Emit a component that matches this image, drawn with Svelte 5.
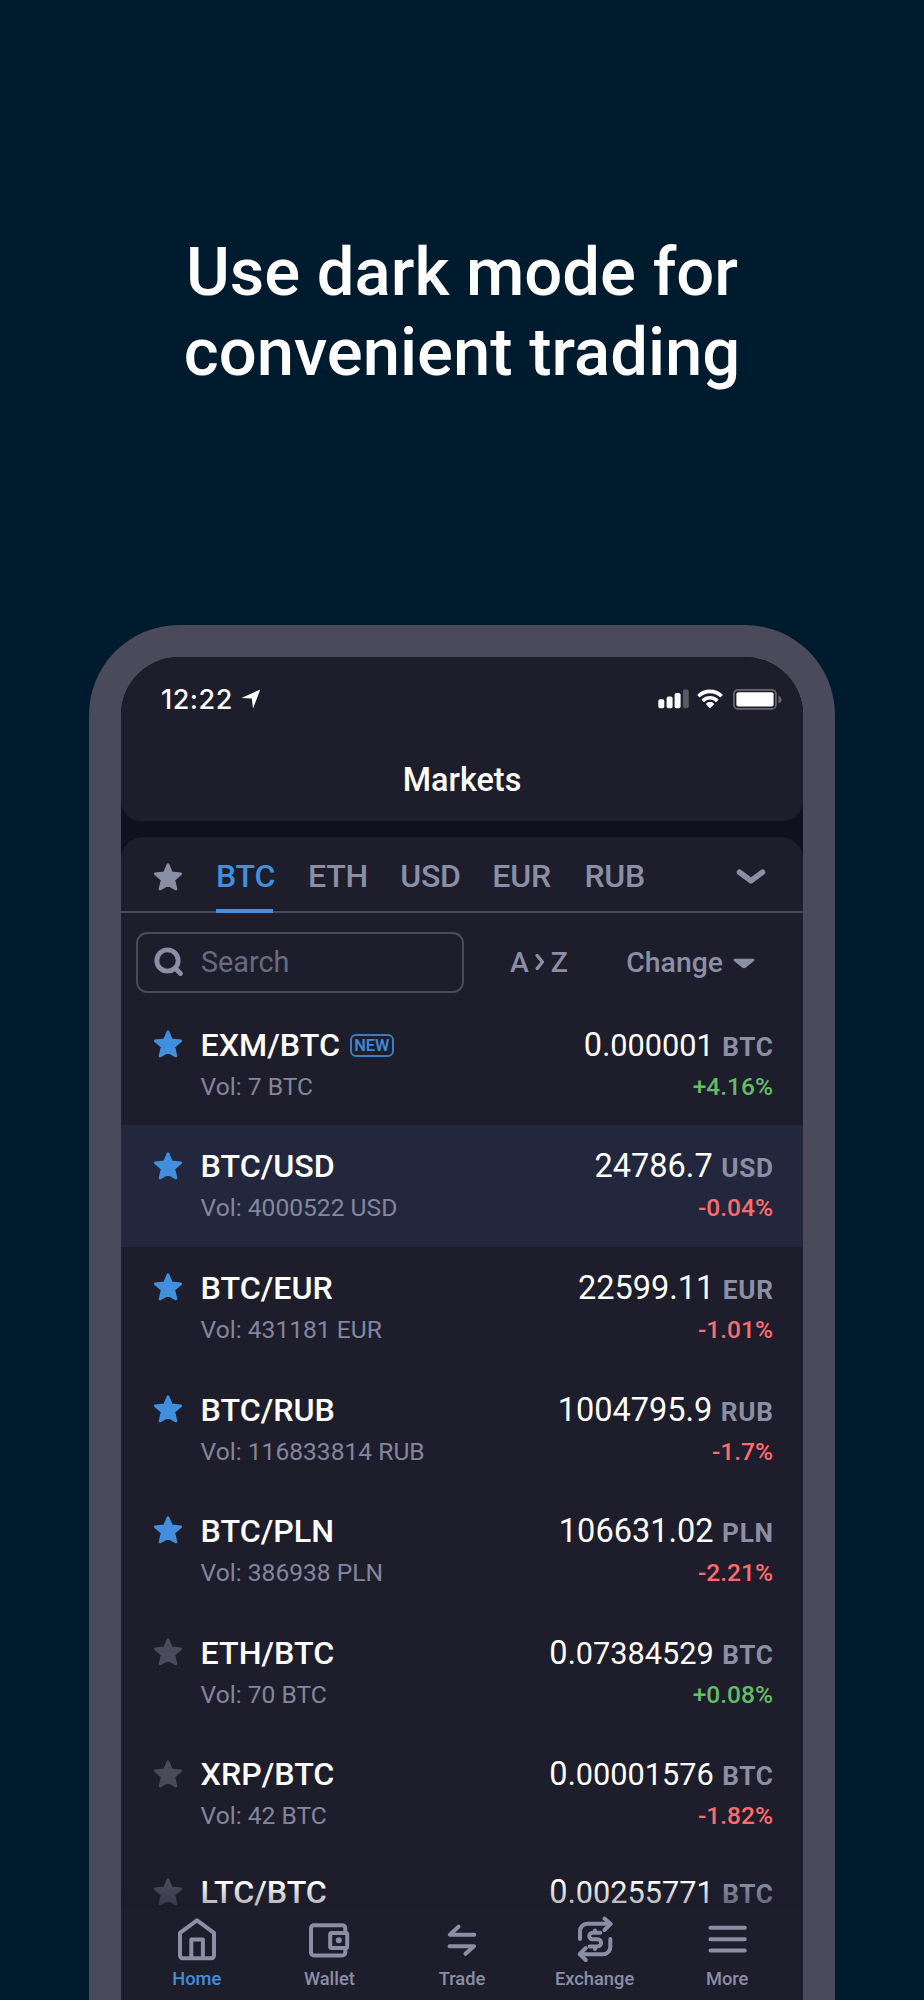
<script lang="ts">
  interface Market {
    pair: string;
    volume?: string;
    price: string;
    currency: string;
    change?: string;
    favorite?: boolean;
    fresh?: boolean;
    selected?: boolean;
  }

  const currencies = ['BTC', 'ETH', 'USD', 'EUR', 'RUB'];
  const navItems = ['Home', 'Wallet', 'Trade', 'Exchange', 'More'];

  const markets: Market[] = [
    { pair: 'EXM/BTC', volume: '7 BTC', price: '0.000001', currency: 'BTC', change: '+4.16%', favorite: true, fresh: true },
    { pair: 'BTC/USD', volume: '4000522 USD', price: '24786.7', currency: 'USD', change: '-0.04%', favorite: true, selected: true },
    { pair: 'BTC/EUR', volume: '431181 EUR', price: '22599.11', currency: 'EUR', change: '-1.01%', favorite: true },
    { pair: 'BTC/RUB', volume: '116833814 RUB', price: '1004795.9', currency: 'RUB', change: '-1.7%', favorite: true },
    { pair: 'BTC/PLN', volume: '386938 PLN', price: '106631.02', currency: 'PLN', change: '-2.21%', favorite: true },
    { pair: 'ETH/BTC', volume: '70 BTC', price: '0.07384529', currency: 'BTC', change: '+0.08%' },
    { pair: 'XRP/BTC', volume: '42 BTC', price: '0.00001576', currency: 'BTC', change: '-1.82%' },
    { pair: 'LTC/BTC', price: '0.00255771', currency: 'BTC' }
  ];

  let activeTab = $state('BTC');
  let activeNav = $state('Home');
</script>

{#snippet star()}
  <svg class="star" viewBox="0 0 28 28" aria-hidden="true">
    <path
      d="M14 1.6 17.5 9.7 26.8 10.7 19.9 16.9 22 26 14 21.6 6 26 8.1 16.9 1.2 10.7 10.5 9.7Z"
    />
  </svg>
{/snippet}

<main>
  <h1>Use dark mode for<br />convenient trading</h1>

  <div class="phone">
    <div class="screen">
      <header>
        <div class="status">
          <span class="time">12:22</span>
          <svg class="location" viewBox="0 0 20 20" aria-hidden="true">
            <path d="M19.3.6 12 19.5 10.8 9.6.4 8.9Z" />
          </svg>
          <svg class="signal" viewBox="0 0 31 20" aria-hidden="true">
            <rect x="0.3" y="10.3" width="6" height="9" rx="1.8" />
            <rect x="8.6" y="7.6" width="6" height="11.7" rx="1.8" />
            <rect x="16.6" y="4" width="6" height="15.3" rx="1.8" />
            <rect x="25" y="0.6" width="5.7" height="18.7" rx="1.8" opacity="0.27" />
          </svg>
          <svg class="wifi" viewBox="0 0 26 20" aria-hidden="true">
            <path
              d="M13 .6C8.1.6 3.8 2.5.6 5.5a.8.8 0 0 0 0 1.1l1.5 1.5q.5.5 1.1 0a14.3 14.3 0 0 1 19.6 0q.6.5 1.1 0l1.5-1.5a.8.8 0 0 0 0-1.1C22.2 2.5 17.9.6 13 .6Z"
            />
            <path
              d="M13 7C9.9 7 7.1 8.2 5 10.1a.8.8 0 0 0 0 1.2l1.5 1.4q.5.5 1.1 0a8 8 0 0 1 10.8 0q.6.5 1.1 0l1.5-1.4a.8.8 0 0 0 0-1.2C18.9 8.2 16.1 7 13 7Z"
            />
            <path
              d="M13 13.1c-1.5 0-2.8.5-3.8 1.4a.7.7 0 0 0 0 1.1l3.2 3.2q.6.5 1.2 0l3.2-3.2a.7.7 0 0 0 0-1.1c-1-.9-2.3-1.4-3.8-1.4Z"
            />
          </svg>
          <svg class="battery" viewBox="0 0 49 21" aria-hidden="true">
            <rect x="0.9" y="0.9" width="42" height="19" rx="4" fill="none" stroke="#686773" stroke-width="1.7" />
            <rect x="3.4" y="3.3" width="37.2" height="14.3" rx="2" />
            <path class="tip" d="M45.5 6.6q3 1.3 3 3.9t-3 3.9Z" />
          </svg>
        </div>
        <h2>Markets</h2>
      </header>

      <section class="panel">
        <div class="tabs">
          {@render star()}
          {#each currencies as currency (currency)}
            <button type="button" class:active={activeTab === currency} onclick={() => (activeTab = currency)}
              >{currency}</button
            >
          {/each}
          <svg class="chevron" viewBox="0 0 30 18" aria-hidden="true">
            <path d="M3.5 4.2 15 12.8 26.5 4.2" />
          </svg>
        </div>

        <div class="controls">
          <div class="search">
            <svg viewBox="0 0 30 30" aria-hidden="true">
              <circle cx="13.5" cy="13.5" r="10.7" />
              <path d="m21.5 21.5 5 5" />
            </svg>
            <span>Search</span>
          </div>
          <div class="sort">
            A
            <svg viewBox="0 0 10 18" aria-hidden="true"><path d="M2.2 2.5 7.4 9 2.2 15.5" /></svg>
            Z
          </div>
          <div class="change-sort">
            Change
            <svg viewBox="0 0 22 12" aria-hidden="true">
              <path d="M1.5.8h19q1.8.7.4 2.2l-8 6.6q-1.9 1.2-3.8 0L1.1 3Q-.3 1.5 1.5.8Z" />
            </svg>
          </div>
        </div>

        <div class="list">
          {#each markets as market (market.pair)}
            <div class="row" class:selected={market.selected} class:favorite={market.favorite}>
              {@render star()}
              <div class="info">
                <div class="pair">
                  {market.pair}
                  {#if market.fresh}<span class="badge">NEW</span>{/if}
                </div>
                {#if market.volume}<div class="volume">Vol: {market.volume}</div>{/if}
              </div>
              <div class="quote">
                <div class="price">
                  {#if market.price.startsWith('0.')}0<span class="fraction">{market.price.slice(1)}</span
                    >{:else}{market.price}{/if}<span class="currency">{market.currency}</span>
                </div>
                {#if market.change}
                  <div class="change" class:up={market.change.startsWith('+')}>{market.change}</div>
                {/if}
              </div>
            </div>
          {/each}
        </div>
      </section>

      <nav>
        {#each navItems as item (item)}
          <button type="button" class:active={activeNav === item} onclick={() => (activeNav = item)}>
            <svg viewBox="0 0 48 48" aria-hidden="true">
              {#if item === 'Home'}
                <path d="M24 5.3 7 17.8V40.5a2.8 2.8 0 0 0 2.8 2.8H38.2A2.8 2.8 0 0 0 41 40.5V17.8Z" />
                <path d="M18.3 43V24.4H29.9V43" />
              {:else if item === 'Wallet'}
                <path d="M40.3 17V13.2A3 3 0 0 0 37.3 10.2H9A3 3 0 0 0 6 13.2V37.5A3 3 0 0 0 9 40.5H37.3A3 3 0 0 0 40.3 37.5V34" />
                <rect x="25.2" y="18" width="17" height="15" rx="1.5" />
                <circle class="dot" cx="33.8" cy="25.3" r="3" />
              {:else if item === 'Trade'}
                <path d="M20.5 11.7 11.8 19.7H36.3" />
                <path d="M11.5 31.2H36L27.5 38.8" />
              {:else if item === 'Exchange'}
                <path d="M9 24V16A7.3 7.3 0 0 1 16.3 8.7H39" />
                <path d="M33.5 3.5 39.7 8.9 33.5 15" />
                <path d="M39.3 24V32A7.3 7.3 0 0 1 32 39.3H9.3" />
                <path d="M14.8 33 8.6 39.1 14.8 45" />
                <path
                  d="M29.2 17.8H21.5a3.2 3.2 0 0 0 0 6.4h5a3.6 3.6 0 0 1 0 7.2H18.7M24 15.5v2M24 32v2"
                />
              {:else}
                <path d="M7.5 12.8H41.8M7.5 24.2H41.8M7.5 35.6H41.8" />
              {/if}
            </svg>
            <span>{item}</span>
          </button>
        {/each}
      </nav>
    </div>
  </div>
</main>

<style>
  :global(body) {
    background: #001a2e;
  }

  main {
    box-sizing: border-box;
    width: 924px;
    height: 2000px;
    padding-top: 232px;
    overflow: hidden;
    background: #001a2e;
    color: #fff;
    font-family: Roboto, sans-serif;
  }

  h1 {
    height: 160px;
    margin: 0 0 233px;
    font-size: 67px;
    font-weight: 500;
    line-height: 80px;
    text-align: center;
  }

  button {
    padding: 0;
    border: 0;
    background: none;
    color: inherit;
    font: inherit;
  }

  .phone {
    box-sizing: border-box;
    width: 746px;
    height: 1375px;
    margin: 0 auto;
    padding: 32px 32px 0;
    border-radius: 90px 90px 0 0;
    background: #4a4a5b;
  }

  .screen {
    display: flex;
    flex-direction: column;
    height: 1343px;
    overflow: hidden;
    border-radius: 58px 58px 0 0;
    background: #11101f;
  }

  header {
    flex: none;
    height: 164px;
    border-radius: 0 0 20px 20px;
    background: #1e1d2b;
  }

  .status {
    display: flex;
    align-items: center;
    height: 84px;
    padding: 0 21px 0 40px;
  }

  .status svg {
    fill: #fff;
  }

  .time {
    font-family: Inter, sans-serif;
    font-size: 27px;
    font-weight: 500;
    letter-spacing: 0.5px;
  }

  .location {
    width: 20px;
    height: 20px;
    margin-left: 8px;
  }

  .signal {
    width: 31px;
    height: 20px;
    margin-left: auto;
  }

  .wifi {
    width: 26px;
    height: 20px;
    margin-left: 8px;
  }

  .battery {
    width: 49px;
    height: 21px;
    margin-left: 10px;
  }

  .battery .tip {
    fill: #686773;
  }

  h2 {
    margin: 19px 0 0;
    font-size: 32.4px;
    font-weight: 500;
    line-height: 40px;
    text-align: center;
  }

  .panel {
    display: flex;
    flex: 1;
    flex-direction: column;
    min-height: 0;
    margin-top: 16px;
    border-radius: 22px 22px 0 0;
    background: #1e1d2b;
  }

  .star {
    flex: none;
    width: 28px;
    height: 28px;
    overflow: visible;
    fill: #4a4a5b;
    stroke: #4a4a5b;
    stroke-width: 2.6;
    stroke-linejoin: round;
  }

  .tabs {
    display: flex;
    flex: none;
    align-items: center;
    height: 74px;
    padding: 0 37px 0 33px;
    border-bottom: 2px solid #4a4a5b;
    color: #8b8fa6;
    font-size: 32px;
    font-weight: 500;
  }

  .tabs .star {
    margin: 5px 34px 0 0;
    fill: #8b8fa6;
    stroke: #8b8fa6;
  }

  .tabs button {
    align-self: stretch;
    width: 57px;
    margin: 0 35.1px -2px 0;
    padding-top: 5px;
    border-bottom: 4px solid transparent;
    letter-spacing: -0.2px;
    text-align: left;
  }

  .tabs button.active {
    border-color: #418fde;
    color: #418fde;
  }

  .chevron {
    width: 30px;
    height: 18px;
    margin: 6px 0 0 auto;
    fill: none;
    stroke: #8b8fa6;
    stroke-width: 5.6;
    stroke-linecap: round;
    stroke-linejoin: round;
  }

  .controls {
    display: flex;
    flex: none;
    align-items: center;
    height: 90.4px;
    box-sizing: border-box;
    padding: 19px 48px 11px 15px;
    color: #8b8fa6;
    font-size: 28.4px;
    font-weight: 500;
  }

  .search {
    display: flex;
    align-items: center;
    gap: 17px;
    box-sizing: border-box;
    width: 328px;
    height: 61px;
    padding: 0 16px;
    border: 2px solid #4a4a5b;
    border-radius: 11px;
    color: #696b80;
    font-size: 28.8px;
    font-weight: 400;
  }

  .search svg {
    width: 30px;
    height: 30px;
    fill: none;
    stroke: #8b8fa6;
    stroke-width: 4.8;
    stroke-linecap: round;
  }

  .sort {
    display: flex;
    align-items: center;
    gap: 6px;
    margin-left: 46px;
  }

  .sort svg {
    width: 10px;
    height: 18px;
    fill: none;
    stroke: #8b8fa6;
    stroke-width: 3.4;
    stroke-linecap: round;
    stroke-linejoin: round;
  }

  .change-sort {
    display: flex;
    align-items: center;
    gap: 10px;
    margin-left: auto;
  }

  .change-sort svg {
    width: 22px;
    height: 12px;
    margin-top: 3px;
    fill: #8b8fa6;
  }

  .list {
    position: relative;
    flex: 1;
    min-height: 0;
    overflow: hidden;
  }

  .list::after {
    content: '';
    position: absolute;
    right: 0;
    bottom: 0;
    left: 0;
    height: 24px;
    background: linear-gradient(rgba(26, 25, 39, 0), rgba(26, 25, 39, 0.35));
  }

  .row {
    display: flex;
    box-sizing: border-box;
    height: 121.6px;
    padding: 21.4px 30px 0 33px;
  }

  .row.selected {
    background: #22273d;
  }

  .row.favorite .star {
    fill: #418fde;
    stroke: #418fde;
  }

  .row:last-child {
    margin-top: -3.5px;
  }

  .row .star {
    margin: 5.2px 18.6px 0 0;
  }

  .pair {
    display: flex;
    align-items: center;
    gap: 10px;
    height: 40px;
    font-size: 32.2px;
    font-weight: 500;
    line-height: 40px;
  }

  .badge {
    box-sizing: border-box;
    width: 44px;
    height: 23px;
    margin-top: 1px;
    border: 2px solid #3a7dc2;
    border-radius: 6px;
    color: #3f89d5;
    font-size: 16.4px;
    font-weight: 600;
    line-height: 20px;
    text-align: center;
  }

  .volume {
    margin-top: 7px;
    color: #83869d;
    font-size: 24.6px;
    line-height: 30px;
  }

  .quote {
    margin-left: auto;
    text-align: right;
  }

  .price {
    height: 40px;
    font-size: 32.5px;
    line-height: 40px;
  }

  .fraction {
    font-size: 30.7px;
  }

  .currency {
    margin-left: 8.5px;
    color: #8b8fa6;
    font-size: 26.2px;
    font-weight: 700;
    letter-spacing: 0.7px;
    margin-right: -0.7px;
  }

  .change {
    margin-top: 7px;
    color: #ff6b6b;
    font-size: 24.5px;
    font-weight: 500;
    line-height: 30px;
  }

  .change.up {
    color: #65bb66;
  }

  nav {
    display: flex;
    flex: none;
    box-sizing: border-box;
    height: 94px;
    padding: 9px 9.5px 0;
    background: #1e1d2b;
  }

  nav button {
    display: flex;
    flex: 1 1 0;
    flex-direction: column;
    align-items: center;
    gap: 4px;
    color: #8b8fa6;
    font-size: 18.3px;
    font-weight: 500;
    line-height: 24px;
  }

  nav button.active {
    color: #418fde;
  }

  nav svg {
    width: 48px;
    height: 48px;
    fill: none;
    stroke: #8b8fa6;
    stroke-width: 4;
    stroke-linecap: round;
    stroke-linejoin: round;
  }

  nav .dot {
    fill: #8b8fa6;
    stroke: none;
  }
</style>
